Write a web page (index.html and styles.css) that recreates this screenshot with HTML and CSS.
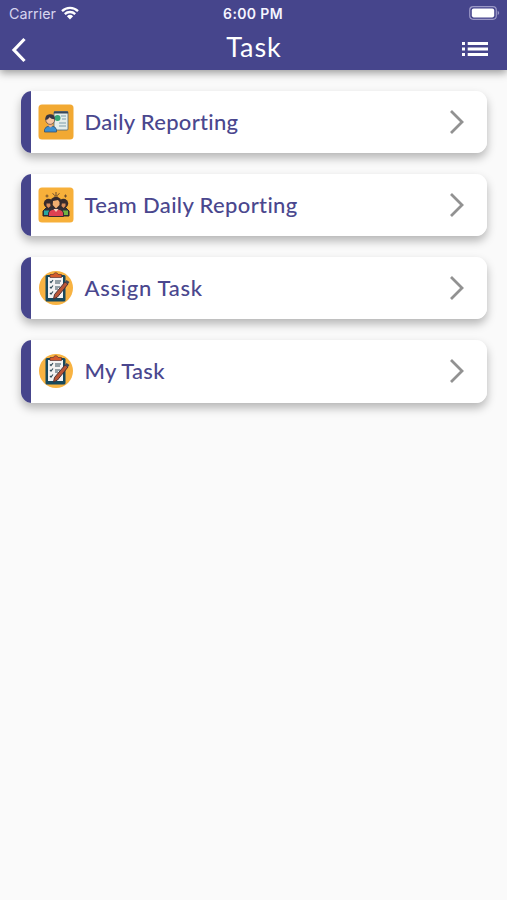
FILE: index.html
```html
<!DOCTYPE html>
<html lang="en">
<head>
<meta charset="utf-8">
<title>Task</title>
<link rel="stylesheet" href="styles.css">
</head>
<body>
<svg width="0" height="0" class="defs">
  <symbol id="chevron" viewBox="0 0 16 26"><path d="M2 2l11 11L2 24" fill="none" stroke="#929292" stroke-width="2.800"/></symbol>
  <symbol id="clipboard" viewBox="0 0 36 36">
    <circle cx="18" cy="18" r="17" fill="#f8b342"/>
    <rect x="7.500" y="5" width="20" height="26.500" rx="1.500" fill="#17495d"/>
    <path d="M10 7h15v21H10z" fill="#f4f3f3"/>
    <path d="M12 7.500V4.500h3.500a2.300 2.300 0 0 1 4.500 0h3.500v3z" fill="#d65b2c" stroke="#5b3432" stroke-width=".7"/>
    <path d="M12 11.500l1 1 2-2.500M12 17l1 1 2-2.500M12 23l1 1 2-2.500M17 11h6M17 13h5M17 17h5M17 19h3" fill="none" stroke="#344e5b" stroke-width="1.200"/>
    <path d="M27 12l3 2-10.500 13-4 2 1-4.500z" fill="#b95537" stroke="#4a3033" stroke-width="1"/>
    <path d="M27 12l1.500-2 3 2-1.500 2z" fill="#41485a"/>
  </symbol>
</svg>
<header class="bar">
  <div class="status">
    <div class="carrier">Carrier
      <svg class="wifi" viewBox="0 0 18 14"><path d="M1 5.200a11.500 11.500 0 0 1 16 0M3.800 8.100a7.500 7.500 0 0 1 10.400 0" fill="none" stroke="#fff" stroke-width="2.300"/><path d="M9 13.500L5.900 10.300a4.500 4.500 0 0 1 6.200 0z" fill="#fff"/></svg>
    </div>
    <div class="time">6:00 PM</div>
    <svg class="battery" viewBox="0 0 31 14"><rect x=".7" y=".7" width="26.600" height="12.600" rx="3.500" fill="none" stroke="#9b98c6" stroke-width="1.200"/><rect x="2.800" y="2.600" width="22.400" height="8.800" rx="1.800" fill="#fff"/><path d="M28.700 4.800q3 2.200 0 4.400z" fill="#9b98c6"/></svg>
  </div>
  <div class="nav">
    <svg class="back" viewBox="0 0 16 26"><path d="M13.500 2L3 13l10.500 11" fill="none" stroke="#fff" stroke-width="3.200"/></svg>
    <h1 class="title">Task</h1>
    <svg class="menu" viewBox="0 0 26 16"><path d="M0 2.500h3M0 8h3M0 13.500h3M5.700 2.500H26M5.700 8H26M5.700 13.500H26" stroke="#fff" stroke-width="3"/></svg>
  </div>
</header>
<main class="list">
  <div class="card">
    <svg class="icon" viewBox="0 0 36 36">
      <rect x=".5" y=".5" width="35" height="35" rx="3.500" fill="#f2a932"/>
      <rect x="16" y="7.500" width="14" height="18.500" rx="1" fill="#e5edea" stroke="#4b6878" stroke-width=".8"/>
      <path d="M16 7.500h14v2H16z" fill="#37475b"/>
      <path d="M23 12h5M24 15h4M21 19h7M21 22h7" stroke="#7d9dab" stroke-width="1"/>
      <circle cx="19.500" cy="14" r="3" fill="#35a575"/>
      <path d="M6.500 28v-2.500q.5-3 6-4 5.500 1 6 4V28z" fill="#3c8fd0" stroke="#37516d" stroke-width=".8"/>
      <path d="M10.500 19h4v3l-2 1.500-2-1.500z" fill="#efb28a"/>
      <circle cx="12.200" cy="16" r="4.400" fill="#f6c5a0" stroke="#4c3f49" stroke-width=".7"/>
      <path d="M7.300 16q-.5-5.500 4.500-5.800 5.500-.2 5 5-3.500.2-5.300-2-1 2.500-4.200 2.800z" fill="#353544"/>
    </svg>
    <span class="label label-daily">Daily Reporting</span>
    <svg class="chevron"><use href="#chevron"/></svg>
  </div>
  <div class="card">
    <svg class="icon" viewBox="0 0 36 36">
      <rect x=".5" y=".5" width="35" height="35" rx="3.500" fill="#f7b03a"/>
      <path d="M9 7.500v3M7.500 9h3M27.500 7.500v3M26 9h3M14.500 6.500l2 1.500M18 5v4M21.500 6.500l-2 1.500M16 9h4" stroke="#6d4d2c" stroke-width="1"/>
      <path d="M5 29v-5l4-4h18l4 4v5z" fill="#302f36" stroke="#2b292d"/>
      <path d="M6 23.500h5V28H6z" fill="#28a6a0"/><path d="M25 23.500h5V28h-5z" fill="#71b443"/>
      <circle cx="10.500" cy="16.500" r="4.700" fill="#382b2c"/><circle cx="25.500" cy="16.500" r="4.700" fill="#382b2c"/>
      <path d="M8.500 16.500h4v2.500l-2 2-2-2zM23.500 16.500h4v2.500l-2 2-2-2z" fill="#d88b5a"/>
      <path d="M10.500 29.500V26q1-4 7.500-4t7.500 4v3.500z" fill="#df4052" stroke="#392a30"/>
      <circle cx="18" cy="15.500" r="5.800" fill="#352a2c"/>
      <path d="M15 14l5-1 1.500 2v3L18 21.500 14.700 18z" fill="#f0ae70"/>
      <path d="M15.500 22l2.500 3 2.500-3" fill="#f4d5bd"/>
    </svg>
    <span class="label label-team">Team Daily Reporting</span>
    <svg class="chevron"><use href="#chevron"/></svg>
  </div>
  <div class="card">
    <svg class="icon"><use href="#clipboard"/></svg>
    <span class="label label-assign">Assign Task</span>
    <svg class="chevron"><use href="#chevron"/></svg>
  </div>
  <div class="card">
    <svg class="icon"><use href="#clipboard"/></svg>
    <span class="label label-my">My Task</span>
    <svg class="chevron"><use href="#chevron"/></svg>
  </div>
</main>
</body>
</html>
```
FILE: styles.css
```css
* { box-sizing: border-box; }
body { margin: 0; min-height: 900px; background: #fafafa; font-family: Lato, "Noto Sans", sans-serif; }
.defs { display: block; height: 0; }
.bar { height: 70px; background: #46458c; color: #fff; box-shadow: 0 3px 8px rgba(0, 0, 0, .38); }
.status { height: 27px; display: grid; grid-template-columns: 1fr auto 1fr; align-items: center; padding: 0 7px 0 9px; font-family: Inter, sans-serif; }
.carrier { display: flex; align-items: center; gap: 5px; font-size: 14.300px; color: #d6d4ef; }
.wifi { width: 18px; height: 14px; margin-top: -2px; }
.time { margin-right: 3px; font-size: 14px; font-weight: 600; letter-spacing: .35px; color: #f5f4ff; }
.battery { width: 31px; height: 14px; justify-self: end; margin-top: -1px; }
.nav { height: 43px; display: grid; grid-template-columns: 1fr auto 1fr; align-items: center; padding: 0 19px 0 11px; }
.back { width: 16px; height: 26px; margin-top: 2px; }
.title { margin: 0 0 3px 9px; font-size: 27px; line-height: 36px; font-weight: 400; letter-spacing: .9px; }
.menu { width: 26px; height: 16px; justify-self: end; }
.list { display: flex; flex-direction: column; gap: 20.500px; padding: 20.700px 20px 0 21px; }
.card { height: 62.600px; display: flex; align-items: center; padding: 0 22px 0 17px; border-radius: 11px; background: linear-gradient(to right, #46458c 10px, #fff 10px); box-shadow: 0 5px 10px rgba(0, 0, 0, .28); }
.icon { width: 36px; height: 36px; flex: none; }
.label { flex: 1; margin-left: 10.500px; font-size: 22px; line-height: 30px; font-weight: 500; color: #4a478e; white-space: nowrap; }
.label-daily { letter-spacing: .3px; }
.label-team { letter-spacing: .35px; }
.label-assign { letter-spacing: .7px; }
.label-my { letter-spacing: .25px; }
.chevron { width: 16px; height: 26px; flex: none; }
```
